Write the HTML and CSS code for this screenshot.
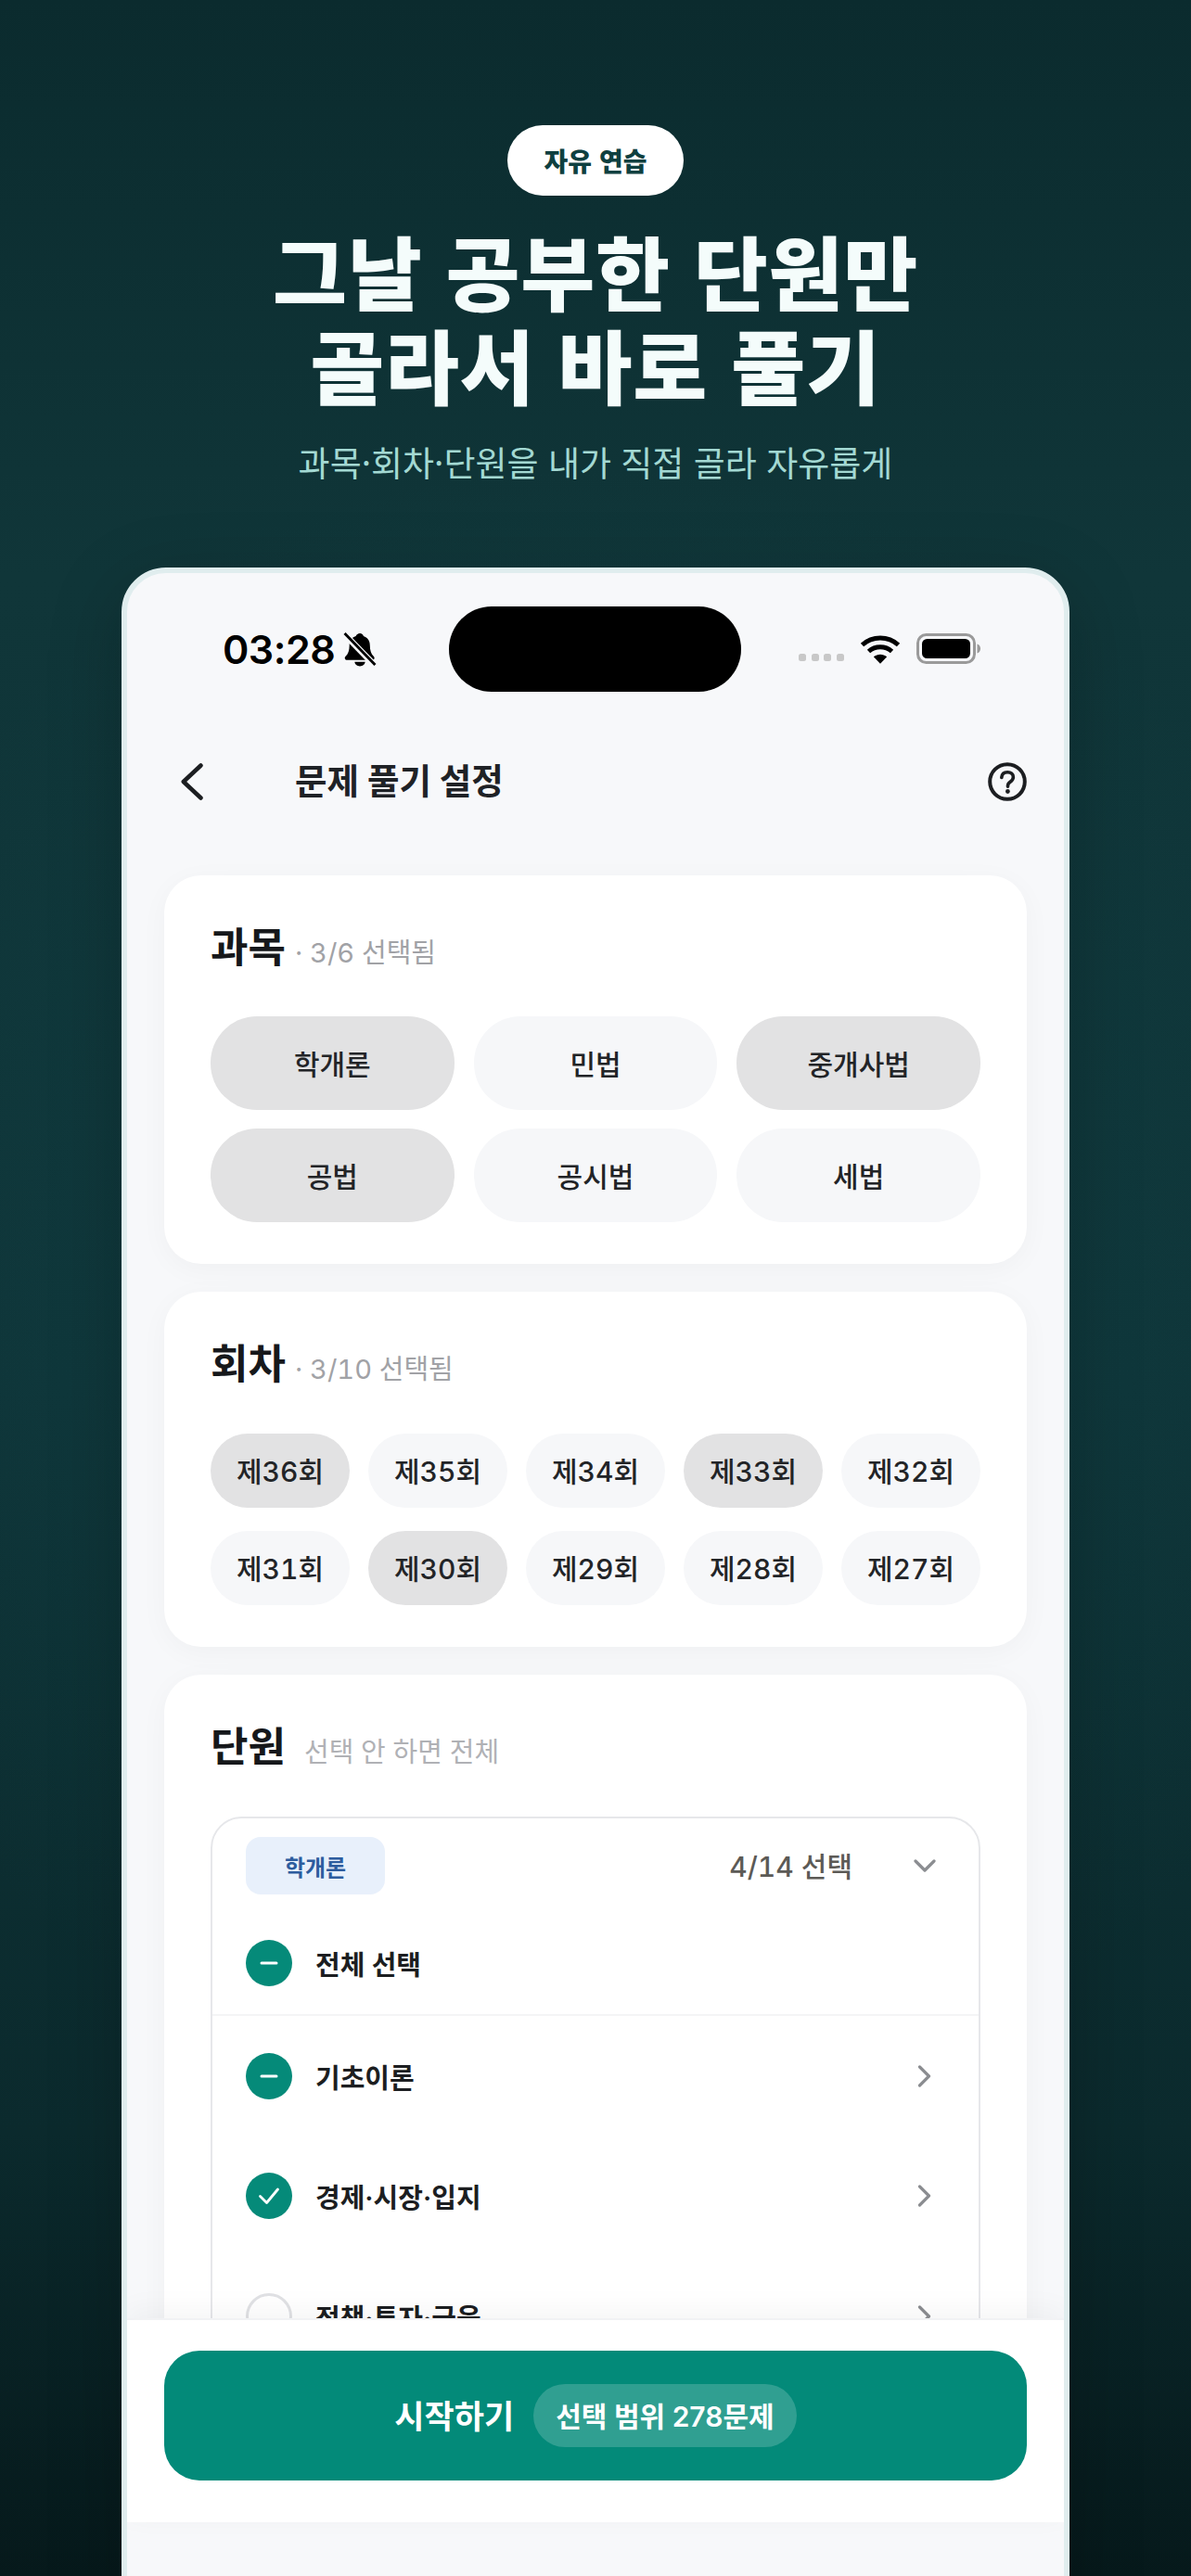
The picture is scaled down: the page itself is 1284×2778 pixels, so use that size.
FILE: index.html
```html
<!DOCTYPE html>
<html lang="ko">
<head>
<meta charset="utf-8">
<title>자유 연습</title>
<link rel="stylesheet" href="styles.css">
</head>
<body>
<div class="page">
  <header class="hero">
    <div class="badge">자유 연습</div>
    <h1 class="headline">그날 공부한 단원만<br>골라서 바로 풀기</h1>
    <p class="lede">과목·회차·단원을 내가 직접 골라 자유롭게</p>
  </header>

  <main class="phone">
    <div class="statusbar">
      <div class="status-left">
        <span class="clock">03:28</span>
        <svg class="bell" viewBox="0 0 34 36" aria-hidden="true">
          <path d="M17 1c2 0 3.400 1.300 3.800 3 4.300 1.400 6.700 5 6.700 9.500 0 5.300 1.300 9 3.900 11.500.9.900 1.100 2.100.5 3-.4.600-1 1-2 1H3.500c-1 0-1.700-.4-2-1-.6-.9-.4-2.100.5-3 2.700-2.500 4-6.200 4-11.500 0-4.500 2.300-8.100 6.700-9.500C13.500 2.300 15 1 17 1z" fill="#000"/>
          <path d="M11.500 31h11c-.3 2.700-2.700 4.500-5.500 4.500s-5.200-1.800-5.500-4.500z" fill="#000"/>
          <path d="M0 1l33 34" stroke="#f7f8fa" stroke-width="6.500"/>
          <path d="M1 1l32 33" stroke="#000" stroke-width="2.800"/>
        </svg>
      </div>
      <div class="island"></div>
      <div class="status-right">
        <div class="signal"><i></i><i></i><i></i><i></i></div>
        <svg class="wifi" viewBox="0 0 44 32" aria-hidden="true">
          <path d="M2.500 11.500C13.500 1.500 30.500 1.500 41.500 11.500" fill="none" stroke="#000" stroke-width="5"/>
          <path d="M9.500 18.500C16.500 12.300 27.500 12.300 34.500 18.500" fill="none" stroke="#000" stroke-width="5"/>
          <path d="M14.800 24.200C19 20.800 25 20.800 29.200 24.200L22 31.800z" fill="#000"/>
        </svg>
        <svg class="battery" viewBox="0 0 70 34" aria-hidden="true">
          <rect x="1.500" y="1.500" width="61" height="30" rx="9" fill="none" stroke="#9a9a9a" stroke-width="3"/>
          <rect x="6" y="6" width="52" height="21" rx="5.500" fill="#000"/>
          <path d="M65.500 11.500c2.500.8 3.500 2.800 3.500 5s-1 4.200-3.500 5z" fill="#9a9a9a"/>
        </svg>
      </div>
    </div>

    <nav class="navbar">
      <svg class="back" viewBox="0 0 24 40" aria-hidden="true">
        <path d="M21.500 2.500L2.800 20 21.500 37.500" fill="none" stroke="#1c1e21" stroke-width="4.500" stroke-linecap="round" stroke-linejoin="round"/>
      </svg>
      <h2 class="nav-title">문제 풀기 설정</h2>
      <svg class="help" viewBox="0 0 42 42" aria-hidden="true">
        <circle cx="21" cy="21" r="18.800" fill="none" stroke="#1c1e21" stroke-width="4"/>
        <path d="M14.800 16.500c.3-3.700 2.900-5.800 6.400-5.800 3.600 0 6.200 2.200 6.200 5.300 0 2.600-1.500 3.900-3.300 5.200-1.700 1.200-2.600 2.300-2.600 4.300v.7" fill="none" stroke="#1c1e21" stroke-width="3.600" stroke-linecap="round"/>
        <circle cx="21.400" cy="31.500" r="2.400" fill="#1c1e21"/>
      </svg>
    </nav>

    <div class="cards">
      <section class="card">
        <div class="card-head first">
          <h3 class="card-title">과목</h3>
          <span class="card-sub">· 3/6 선택됨</span>
        </div>
        <div class="subject-grid">
          <button class="chip subject on">학개론</button>
          <button class="chip subject">민법</button>
          <button class="chip subject on">중개사법</button>
          <button class="chip subject on">공법</button>
          <button class="chip subject">공시법</button>
          <button class="chip subject">세법</button>
        </div>
      </section>

      <section class="card">
        <div class="card-head">
          <h3 class="card-title">회차</h3>
          <span class="card-sub">· 3/10 선택됨</span>
        </div>
        <div class="round-grid">
          <button class="chip round on">제36회</button>
          <button class="chip round">제35회</button>
          <button class="chip round">제34회</button>
          <button class="chip round on">제33회</button>
          <button class="chip round">제32회</button>
          <button class="chip round">제31회</button>
          <button class="chip round on">제30회</button>
          <button class="chip round">제29회</button>
          <button class="chip round">제28회</button>
          <button class="chip round">제27회</button>
        </div>
      </section>

      <section class="card">
        <div class="card-head wide">
          <h3 class="card-title">단원</h3>
          <span class="card-sub light">선택 안 하면 전체</span>
        </div>
        <div class="unit-box">
          <div class="unit-head">
            <span class="tag">학개론</span>
            <span class="count">4/14 선택</span>
            <svg class="chev-down" viewBox="0 0 24 14" aria-hidden="true">
              <path d="M2 2l10 10L22 2" fill="none" stroke="#8b8d91" stroke-width="3.200" stroke-linecap="round" stroke-linejoin="round"/>
            </svg>
          </div>
          <div class="unit-row all">
            <span class="tick"><svg viewBox="0 0 50 50" aria-hidden="true"><path d="M17 25h16" stroke="#fff" stroke-width="3" stroke-linecap="round"/></svg></span>
            <span class="unit-name">전체 선택</span>
          </div>
          <div class="unit-row">
            <span class="tick"><svg viewBox="0 0 50 50" aria-hidden="true"><path d="M17 25h16" stroke="#fff" stroke-width="3" stroke-linecap="round"/></svg></span>
            <span class="unit-name">기초이론</span>
            <svg class="chev-right" viewBox="0 0 16 24" aria-hidden="true"><path d="M2.500 2l10 10-10 10" fill="none" stroke="#8b8d91" stroke-width="3.200" stroke-linecap="round" stroke-linejoin="round"/></svg>
          </div>
          <div class="unit-row">
            <span class="tick"><svg viewBox="0 0 50 50" aria-hidden="true"><path d="M15.500 25.500l7 7 12-14.500" fill="none" stroke="#fff" stroke-width="2.800" stroke-linecap="round" stroke-linejoin="round"/></svg></span>
            <span class="unit-name">경제·시장·입지</span>
            <svg class="chev-right" viewBox="0 0 16 24" aria-hidden="true"><path d="M2.500 2l10 10-10 10" fill="none" stroke="#8b8d91" stroke-width="3.200" stroke-linecap="round" stroke-linejoin="round"/></svg>
          </div>
          <div class="unit-row">
            <span class="tick off"></span>
            <span class="unit-name">정책·투자·금융</span>
            <svg class="chev-right" viewBox="0 0 16 24" aria-hidden="true"><path d="M2.500 2l10 10-10 10" fill="none" stroke="#8b8d91" stroke-width="3.200" stroke-linecap="round" stroke-linejoin="round"/></svg>
          </div>
        </div>
      </section>
    </div>

    <footer class="footer">
      <button class="start">
        <span class="start-label">시작하기</span>
        <span class="start-pill">선택 범위 278문제</span>
      </button>
    </footer>
  </main>
</div>
</body>
</html>
```

FILE: styles.css
```css
* { box-sizing: border-box; }

html, body {
  margin: 0;
  padding: 0;
  background: #061c1e;
}

body {
  font-family: Inter, "Noto Sans CJK KR", "Noto Sans", sans-serif;
}

.page {
  width: 1284px;
  height: 2778px;
  overflow: hidden;
  display: flex;
  flex-direction: column;
  align-items: center;
  background:
    radial-gradient(ellipse 900px 900px at 50% 1400px, rgba(22, 84, 88, .34), rgba(22, 84, 88, 0) 100%),
    linear-gradient(180deg, #0b2b2e 0, #103639 620px, #0e3337 1500px, #0b2a2d 2300px, #06191b 2778px);
}

.hero {
  display: flex;
  flex-direction: column;
  align-items: center;
  padding-top: 135px;
  flex: none;
}

.badge {
  height: 76px;
  width: 190px;
  border-radius: 38px;
  background: #fff;
  color: #0f4040;
  font-family: "Noto Sans CJK KR", sans-serif;
  font-size: 28px;
  font-weight: 900;
  display: flex;
  align-items: center;
  justify-content: center;
}

.headline {
  margin: 30px 0 0;
  font-family: "Noto Sans CJK KR", sans-serif;
  font-size: 87px;
  line-height: 101px;
  font-weight: 900;
  color: #f4fcfb;
  text-align: center;
  letter-spacing: .7px;
}

.lede {
  margin: 30px 0 0;
  font-family: "Noto Sans CJK KR", sans-serif;
  font-size: 37px;
  line-height: 50px;
  font-weight: 400;
  color: #a3d9d3;
  text-align: center;
}

.phone {
  position: relative;
  flex: none;
  margin-top: 89px;
  width: 1022px;
  height: 2300px;
  border: 6px solid #e0edee;
  border-radius: 48px;
  background: #f7f8fa;
  overflow: hidden;
  box-shadow: 0 20px 80px rgba(0, 0, 0, .22);
}

.statusbar {
  height: 159px;
  padding: 36px 50px 0 103px;
  display: flex;
  align-items: flex-start;
}

.status-left {
  width: 244px;
  display: flex;
  align-items: center;
  gap: 9px;
  height: 92px;
  flex: none;
}

.clock {
  font-size: 43px;
  font-weight: 600;
  color: #000;
  letter-spacing: -.5px;
  line-height: 1;
}

.bell {
  width: 36px;
  height: 37px;
  flex: none;
}

.island {
  width: 315px;
  height: 92px;
  border-radius: 46px;
  background: #000;
  flex: none;
}

.status-right {
  position: relative;
  height: 92px;
  flex: 1;
  display: flex;
  align-items: center;
  padding-left: 62px;
}

.signal {
  display: flex;
  gap: 5.500px;
  margin-top: 18px;
}

.signal i {
  width: 8px;
  height: 8px;
  border-radius: 2.500px;
  background: #c8c8c8;
}

.wifi {
  width: 44px;
  height: 32px;
  margin-left: 17px;
}

.battery {
  width: 70px;
  height: 34px;
  margin-left: 17px;
}

.navbar {
  height: 132px;
  padding: 0 40px 0 58px;
  display: flex;
  align-items: center;
}

.back {
  width: 24px;
  height: 40px;
  flex: none;
}

.nav-title {
  margin: 0 0 0 99px;
  flex: 1;
  font-size: 37.500px;
  font-weight: 700;
  line-height: 1.3;
  color: #1f2226;
}

.help {
  width: 42px;
  height: 42px;
  flex: none;
}

.cards {
  padding: 35px 40px 0;
  display: flex;
  flex-direction: column;
  gap: 30px;
}

.card {
  background: #fff;
  border-radius: 40px;
  padding: 45px 50px;
  box-shadow: 0 6px 30px rgba(20, 30, 40, .035);
}

.card-head {
  height: 66px;
  margin-bottom: 42px;
  display: flex;
  align-items: baseline;
  gap: 10px;
}

.card-head.first {
  margin-bottom: 41px;
}

.card-head.wide {
  gap: 20px;
}

.card-title {
  margin: 0;
  font-size: 44px;
  line-height: 66px;
  font-weight: 700;
  color: #16181b;
}

.card-sub {
  font-size: 29px;
  font-weight: 400;
  color: #a1a2a6;
  font-variant-numeric: tabular-nums;
}

.card-sub.light {
  color: #b0b1b5;
}

.subject-grid {
  display: grid;
  grid-template-columns: repeat(3, 1fr);
  gap: 20px 21px;
}

.round-grid {
  display: grid;
  grid-template-columns: repeat(5, 1fr);
  gap: 25px 20px;
}

.chip {
  border: 0;
  padding: 0 0 2px;
  background: #f6f7f9;
  color: #222427;
  font-family: inherit;
  font-weight: 500;
  font-variant-numeric: tabular-nums;
  display: flex;
  align-items: center;
  justify-content: center;
}

.chip.on {
  background: #e2e2e3;
}

.subject {
  height: 101px;
  border-radius: 50px;
  font-size: 30px;
}

.round {
  height: 80px;
  border-radius: 40px;
  font-size: 30px;
}

.unit-box {
  border: 2.500px solid #e6e7ea;
  border-radius: 34px;
  padding: 20px 0 0;
  background: #fff;
}

.unit-head {
  height: 62px;
  padding: 0 46px 0 36px;
  display: flex;
  align-items: center;
}

.tag {
  width: 150px;
  height: 62px;
  border-radius: 16px;
  background: #e8f0fb;
  color: #2d5c9e;
  font-size: 24px;
  font-weight: 700;
  display: flex;
  align-items: center;
  justify-content: center;
}

.count {
  margin-left: auto;
  margin-right: 66px;
  font-size: 30px;
  font-weight: 500;
  color: #5c5a56;
  font-variant-numeric: tabular-nums;
  padding-bottom: 2px;
}

.chev-down {
  width: 24px;
  height: 14px;
  flex: none;
}

.unit-row {
  height: 129.500px;
  padding: 0 50px 0 36px;
  display: flex;
  align-items: center;
}

.unit-row.all {
  height: 112px;
  margin-top: 19px;
  border-bottom: 2px solid #f4f5f6;
}

.tick {
  width: 50px;
  height: 50px;
  border-radius: 50%;
  background: #058a79;
  flex: none;
}

.tick svg {
  display: block;
  width: 50px;
  height: 50px;
}

.tick.off {
  background: #fff;
  border: 3.500px solid #e0e1e4;
}

.unit-name {
  margin-left: 25px;
  flex: 1;
  font-size: 29px;
  font-weight: 600;
  color: #1c1e21;
}

.chev-right {
  width: 16px;
  height: 24px;
  flex: none;
}

.footer {
  position: absolute;
  left: 0;
  right: 0;
  bottom: 186px;
  height: 220px;
  padding: 33px 40px 0;
  background: #fff;
  border-top: 2px solid #f1f2f4;
  box-shadow: 0 -8px 30px rgba(0, 0, 0, .045);
}

.start {
  width: 100%;
  height: 140px;
  border: 0;
  border-radius: 38px;
  background: #038a79;
  color: #fff;
  font-family: inherit;
  display: flex;
  align-items: center;
  justify-content: center;
  gap: 21px;
}

.start-label {
  font-size: 35px;
  font-weight: 600;
  padding-bottom: 3px;
}

.start-pill {
  height: 68px;
  padding: 0 24px 3px;
  border-radius: 34px;
  background: rgba(255, 255, 255, .18);
  font-size: 30px;
  font-weight: 600;
  display: flex;
  align-items: center;
}
```
